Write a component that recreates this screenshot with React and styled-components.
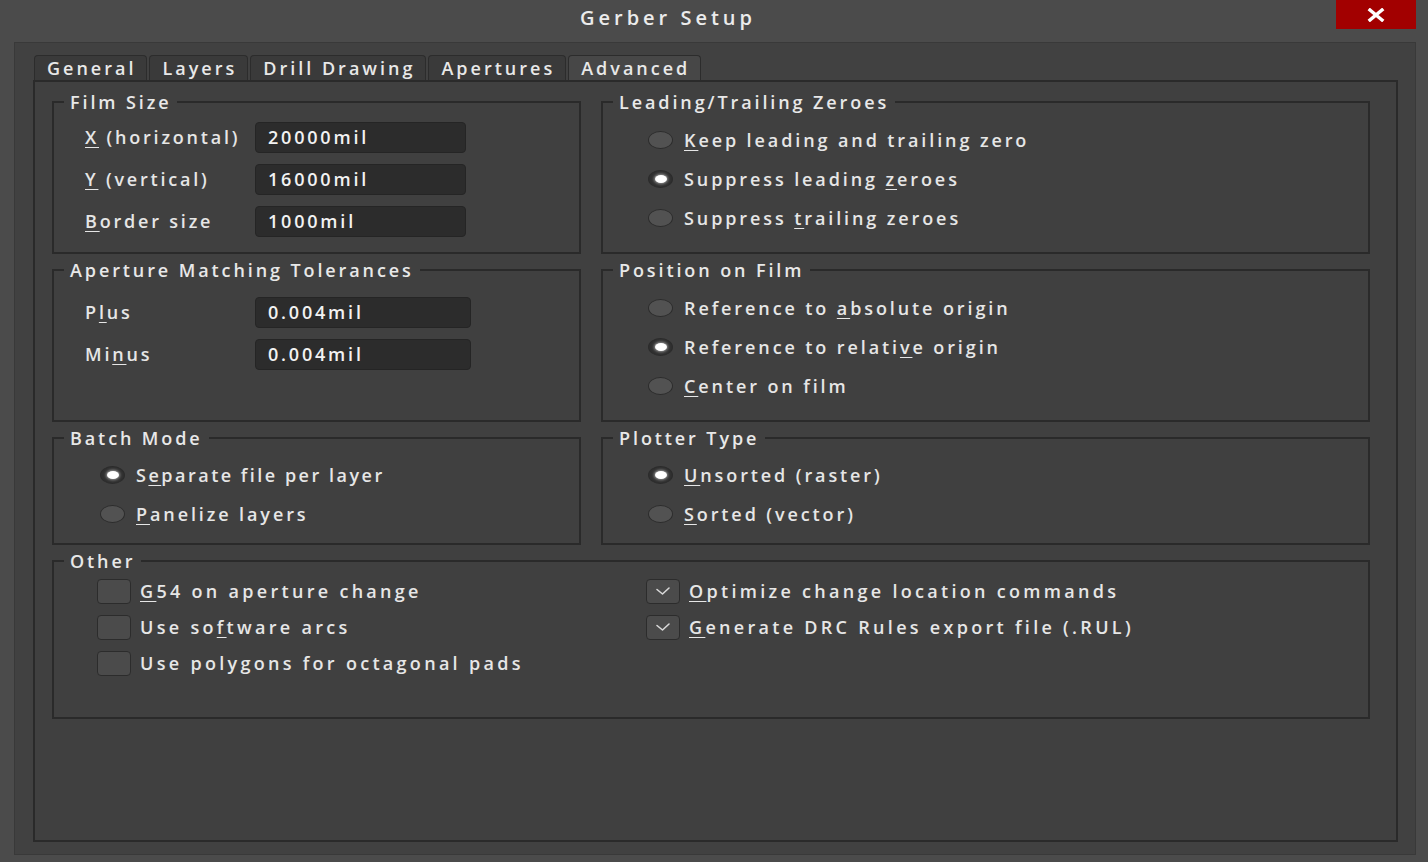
import React from "react";
import styled, { createGlobalStyle } from "styled-components";

const GlobalStyle = createGlobalStyle`
  html, body { margin: 0; padding: 0; background: #4b4b4b; }
  body {
    font-family: "Open Sans", "Noto Sans", sans-serif;
    color: #e6e6e6;
  }
  * { box-sizing: border-box; }
`;

const Window = styled.div`
  width: 1428px;
  height: 862px;
  display: flex;
  flex-direction: column;
  background: #4b4b4b;
`;

const TitleBar = styled.div`
  height: 42px;
  display: flex;
  align-items: flex-start;
`;

const Title = styled.div`
  flex: 1;
  text-align: center;
  font-size: 20px;
  font-weight: 600;
  letter-spacing: 4px;
  line-height: 36px;
  color: #ebebeb;
`;

const CloseButton = styled.div`
  width: 80px;
  height: 29px;
  margin-right: 12px;
  background: #a20000;
  display: flex;
  align-items: center;
  justify-content: center;
`;

const Frame = styled.div`
  flex: 1;
  margin: 0 12px 7px 14px;
  background: #414141;
  border: 1px solid #393939;
  padding: 12px 17px 12px 18px;
  display: flex;
  flex-direction: column;
`;

const TabBar = styled.div`
  display: flex;
  gap: 2px;
  padding-left: 1px;
  height: 25px;
`;

const Tab = styled.div`
  height: 25px;
  padding: 0 10px 0 12px;
  display: flex;
  align-items: center;
  font-size: 18px;
  font-weight: 600;
  letter-spacing: 3px;
  border: 1px solid #2c2c2c;
  border-bottom: none;
  border-radius: 4px 4px 0 0;
  background: ${(p) => (p.$active ? "#474747" : "#3a3a3a")};
  color: #e8e8e8;
`;

const Content = styled.div`
  flex: 1;
  border: 2px solid #2a2a2a;
  background: #404040;
  padding: 10px 26px 0 17px;
  display: grid;
  grid-template-columns: 529px 769px;
  grid-template-rows: 162px 162px 117px 168px;
  column-gap: 20px;
  row-gap: 6px;
  align-content: start;
`;

const Group = styled.fieldset`
  margin: 0;
  padding: 0;
  border: 2px solid #2a2a2a;
  min-width: 0;
  grid-column: ${(p) => (p.$wide ? "1 / -1" : "auto")};
`;

const Legend = styled.legend`
  margin-left: 10px;
  padding: 0 6px;
  font-size: 18px;
  font-weight: 600;
  letter-spacing: 2.9px;
  line-height: 20px;
  color: #e8e8e8;
`;

const GroupBody = styled.div`
  padding: ${(p) => p.$pad};
`;

const FieldGrid = styled.div`
  display: grid;
  grid-template-columns: 170px ${(p) => p.$inputWidth}px;
  grid-auto-rows: 42px;
  align-items: center;
`;

const Label = styled.div`
  font-size: 18px;
  font-weight: 600;
  letter-spacing: 2.8px;
  white-space: nowrap;
`;

const Input = styled.div`
  height: 31px;
  background: #2c2c2c;
  border: 1px solid #252525;
  border-radius: 4px;
  padding-left: 12px;
  display: flex;
  align-items: center;
  font-size: 18px;
  font-weight: 600;
  letter-spacing: 2.8px;
  color: #f2f2f2;
`;

const OptionList = styled.div`
  display: flex;
  flex-direction: column;
`;

const OptionRow = styled.div`
  height: 39px;
  display: flex;
  align-items: center;
  gap: 11px;
  font-size: 18px;
  font-weight: 600;
  letter-spacing: ${(p) => p.$spacing || "2.9px"};
  white-space: nowrap;
`;

const Radio = styled.span`
  width: 25px;
  height: 18px;
  border-radius: 50%;
  flex: none;
  display: flex;
  align-items: center;
  justify-content: center;
  background: ${(p) => (p.$checked ? "#2f2f2f" : "#525252")};
  border: 1.5px solid #2c2c2c;
  &::after {
    content: "";
    display: ${(p) => (p.$checked ? "block" : "none")};
    width: 12px;
    height: 8px;
    border-radius: 50%;
    background: #ffffff;
    box-shadow: 0 0 3px 1px rgba(255, 255, 255, 0.5);
  }
`;

const CheckGrid = styled.div`
  display: grid;
  grid-template-columns: 549px 1fr;
  grid-template-rows: repeat(3, 36px);
  grid-auto-flow: column;
`;

const CheckRow = styled.div`
  display: flex;
  align-items: center;
  gap: 9px;
  font-size: 18px;
  font-weight: 600;
  letter-spacing: 3.3px;
  white-space: nowrap;
`;

const Box = styled.span`
  width: 34px;
  height: 25px;
  flex: none;
  border-radius: 4px;
  background: #4b4b4b;
  border: 1.5px solid #2c2c2c;
  display: flex;
  align-items: center;
  justify-content: center;
`;

const U = styled.u`
  text-decoration-thickness: 1px;
  text-underline-offset: 3px;
`;

const Check = () => (
  <svg width="16" height="10" viewBox="0 0 16 10">
    <path d="M2 3.5 L7.5 8 L14 2" fill="none" stroke="#d8d8d8" strokeWidth="1.6" strokeLinecap="round" strokeLinejoin="round" />
  </svg>
);

const Radiobox = ({ checked, spacing, children }) => (
  <OptionRow $spacing={spacing}>
    <Radio $checked={checked} />
    <span>{children}</span>
  </OptionRow>
);

const Checkbox = ({ checked, children }) => (
  <CheckRow>
    <Box>{checked && <Check />}</Box>
    <span>{children}</span>
  </CheckRow>
);

export default function App() {
  return (
    <>
      <GlobalStyle />
      <Window>
        <TitleBar>
          <Title>Gerber Setup</Title>
          <CloseButton>
            <svg width="18" height="14" viewBox="0 0 18 14">
              <path d="M3 2 L15 12 M15 2 L3 12" stroke="#fff" strokeWidth="3.4" strokeLinecap="square" />
            </svg>
          </CloseButton>
        </TitleBar>
        <Frame>
          <TabBar>
            <Tab>General</Tab>
            <Tab>Layers</Tab>
            <Tab>Drill Drawing</Tab>
            <Tab>Apertures</Tab>
            <Tab $active>Advanced</Tab>
          </TabBar>
          <Content>
            <Group>
              <Legend>Film Size</Legend>
              <GroupBody $pad="4px 0 0 31px">
                <FieldGrid $inputWidth={211}>
                  <Label><U>X</U> (horizontal)</Label>
                  <Input>20000mil</Input>
                  <Label><U>Y</U> (vertical)</Label>
                  <Input>16000mil</Input>
                  <Label><U>B</U>order size</Label>
                  <Input>1000mil</Input>
                </FieldGrid>
              </GroupBody>
            </Group>
            <Group>
              <Legend>Leading/Trailing Zeroes</Legend>
              <GroupBody $pad="8px 0 0 45px">
                <OptionList>
                  <Radiobox><U>K</U>eep leading and trailing zero</Radiobox>
                  <Radiobox checked>Suppress leading <U>z</U>eroes</Radiobox>
                  <Radiobox>Suppress <U>t</U>railing zeroes</Radiobox>
                </OptionList>
              </GroupBody>
            </Group>
            <Group>
              <Legend>Aperture Matching Tolerances</Legend>
              <GroupBody $pad="11px 0 0 31px">
                <FieldGrid $inputWidth={216}>
                  <Label>P<U>l</U>us</Label>
                  <Input>0.004mil</Input>
                  <Label>Mi<U>n</U>us</Label>
                  <Input>0.004mil</Input>
                </FieldGrid>
              </GroupBody>
            </Group>
            <Group>
              <Legend>Position on Film</Legend>
              <GroupBody $pad="8px 0 0 45px">
                <OptionList>
                  <Radiobox>Reference to <U>a</U>bsolute origin</Radiobox>
                  <Radiobox checked>Reference to relati<U>v</U>e origin</Radiobox>
                  <Radiobox><U>C</U>enter on film</Radiobox>
                </OptionList>
              </GroupBody>
            </Group>
            <Group>
              <Legend>Batch Mode</Legend>
              <GroupBody $pad="7px 0 0 46px">
                <OptionList>
                  <Radiobox checked spacing="2.5px">S<U>e</U>parate file per layer</Radiobox>
                  <Radiobox><U>P</U>anelize layers</Radiobox>
                </OptionList>
              </GroupBody>
            </Group>
            <Group>
              <Legend>Plotter Type</Legend>
              <GroupBody $pad="7px 0 0 45px">
                <OptionList>
                  <Radiobox checked><U>U</U>nsorted (raster)</Radiobox>
                  <Radiobox><U>S</U>orted (vector)</Radiobox>
                </OptionList>
              </GroupBody>
            </Group>
            <Group $wide>
              <Legend>Other</Legend>
              <GroupBody $pad="2px 0 0 43px">
                <CheckGrid>
                  <Checkbox><U>G</U>54 on aperture change</Checkbox>
                  <Checkbox>Use so<U>f</U>tware arcs</Checkbox>
                  <Checkbox>Use polygons for octagonal pads</Checkbox>
                  <Checkbox checked><U>O</U>ptimize change location commands</Checkbox>
                  <Checkbox checked><U>G</U>enerate DRC Rules export file (.RUL)</Checkbox>
                </CheckGrid>
              </GroupBody>
            </Group>
          </Content>
        </Frame>
      </Window>
    </>
  );
}
